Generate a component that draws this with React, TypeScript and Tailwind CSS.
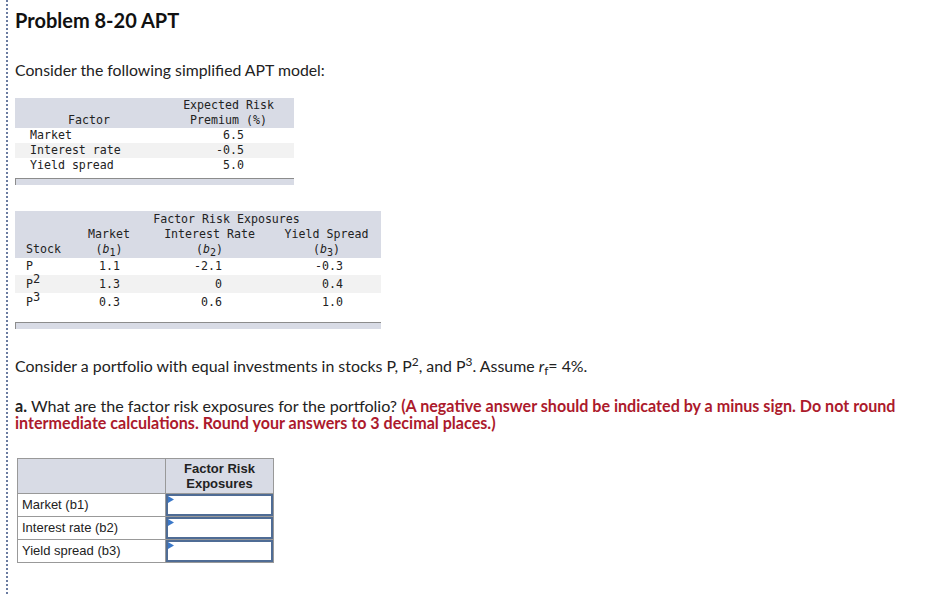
export default function App() {
  const mono = "font-['DejaVu_Sans_Mono',monospace] text-[11.6px] leading-[15px] text-[#222]";
  return (
    <div className="min-h-[594px] bg-white font-['Lato',sans-serif] text-[#222]">
      <div className="ml-[6px] min-h-[594px] border-l-2 border-dotted border-[#6a7ba0] pl-[7px] pt-[8px]">
        <h1 className="text-[20px] font-bold leading-[24px] text-[#111]">Problem 8-20 APT</h1>
        <p className="mt-[28px] text-[15.8px] leading-[20px]">Consider the following simplified APT model:</p>

        {/* Table 1 */}
        <div className={`mt-[18px] w-[279px] ${mono}`}>
          <div className="grid grid-cols-[148px_131px] bg-[#d8dbe5]">
            <div className="flex items-end justify-center">Factor</div>
            <div className="text-center">
              <div>Expected Risk</div>
              <div>Premium (%)</div>
            </div>
          </div>
          <div className="grid grid-cols-[148px_131px] h-[15px]">
            <div className="pl-[15px]">Market</div>
            <div className="pr-[50px] text-right">6.5</div>
          </div>
          <div className="grid grid-cols-[148px_131px] h-[15px] bg-[#f2f2f2]">
            <div className="pl-[15px]">Interest rate</div>
            <div className="pr-[50px] text-right">-0.5</div>
          </div>
          <div className="grid grid-cols-[148px_131px] h-[15px]">
            <div className="pl-[15px]">Yield spread</div>
            <div className="pr-[50px] text-right">5.0</div>
          </div>
          <div className="mt-[5px] h-[7px] border-l border-t border-[#8c8c8c] bg-[#d8dbe5]" />
        </div>

        {/* Table 2 */}
        <div className={`mt-[26px] w-[366px] ${mono}`}>
          <div className="grid grid-cols-[63px_62px_139px_102px] bg-[#d8dbe5] pt-[1px] pb-[1px]">
            <div className="col-span-3 col-start-2 text-center pr-[6px]">Factor Risk Exposures</div>
            <div className="col-start-2 text-center">Market</div>
            <div className="text-center">Interest Rate</div>
            <div className="text-center pr-[7px]">Yield Spread</div>
            <div className="pl-[11px]">Stock</div>
            <div className="text-center">(<i>b</i><sub className="text-[10px]">1</sub>)</div>
            <div className="text-center">(<i>b</i><sub className="text-[10px]">2</sub>)</div>
            <div className="text-center pr-[7px]">(<i>b</i><sub className="text-[10px]">3</sub>)</div>
          </div>
          <div className="grid grid-cols-[63px_62px_139px_102px] h-[17px] items-center">
            <div className="pl-[11px]">P</div>
            <div className="pr-[20px] text-right">1.1</div>
            <div className="pr-[57px] text-right">-2.1</div>
            <div className="pr-[38px] text-right">-0.3</div>
          </div>
          <div className="grid grid-cols-[63px_62px_139px_102px] h-[18px] items-end pb-[1px] bg-[#f2f2f2]">
            <div className="pl-[11px]">P<sup className="text-[12px] top-[-0.4em]">2</sup></div>
            <div className="pr-[20px] text-right">1.3</div>
            <div className="pr-[57px] text-right">0</div>
            <div className="pr-[38px] text-right">0.4</div>
          </div>
          <div className="grid grid-cols-[63px_62px_139px_102px] h-[18px] items-end pb-[1px]">
            <div className="pl-[11px]">P<sup className="text-[12px] top-[-0.4em]">3</sup></div>
            <div className="pr-[20px] text-right">0.3</div>
            <div className="pr-[57px] text-right">0.6</div>
            <div className="pr-[38px] text-right">1.0</div>
          </div>
          <div className="mt-[11px] h-[7px] border-l border-t border-[#8c8c8c] bg-[#d8dbe5]" />
        </div>

        <p className="mt-[27px] text-[15.9px] leading-[20px]">
          Consider a portfolio with equal investments in stocks P, P<sup>2</sup>, and P<sup>3</sup>. Assume <i>r</i>
          <sub>f</sub>= 4%.
        </p>

        <p className="mt-[21px] w-[910px] text-[16.1px] leading-[17px]">
          <b>a.</b> What are the factor risk exposures for the portfolio?{" "}
          <b className="text-[#ac1a2c]">
            (A negative answer should be indicated by a minus sign. Do not round intermediate calculations. Round your
            answers to 3 decimal places.)
          </b>
        </p>

        {/* Answer table */}
        <div className="ml-[2px] mt-[27px] w-[257px] border border-[#999] font-['Liberation_Sans',Arial,sans-serif] text-[13px] text-[#222]">
          <div className="grid h-[34px] grid-cols-[148px_1fr] bg-[#d8dbe5]">
            <div className="border-r border-[#999]" />
            <div className="pt-[2px] text-center font-bold leading-[15px]">
              Factor Risk
              <br />
              Exposures
            </div>
          </div>
          {["Market (b1)", "Interest rate (b2)", "Yield spread (b3)"].map((label) => (
            <div key={label} className="grid h-[23px] grid-cols-[148px_1fr] border-t border-[#999]">
              <div className="flex items-center border-r border-[#999] pl-[4px]">{label}</div>
              <div className="relative border-2 border-[#4f6c95] bg-white">
                <svg className="absolute left-0 top-0" width="6" height="7" viewBox="0 0 6 7">
                  <polygon points="0,0 6,3.5 0,7" fill="#3b78c8" />
                </svg>
              </div>
            </div>
          ))}
        </div>
      </div>
    </div>
  );
}
